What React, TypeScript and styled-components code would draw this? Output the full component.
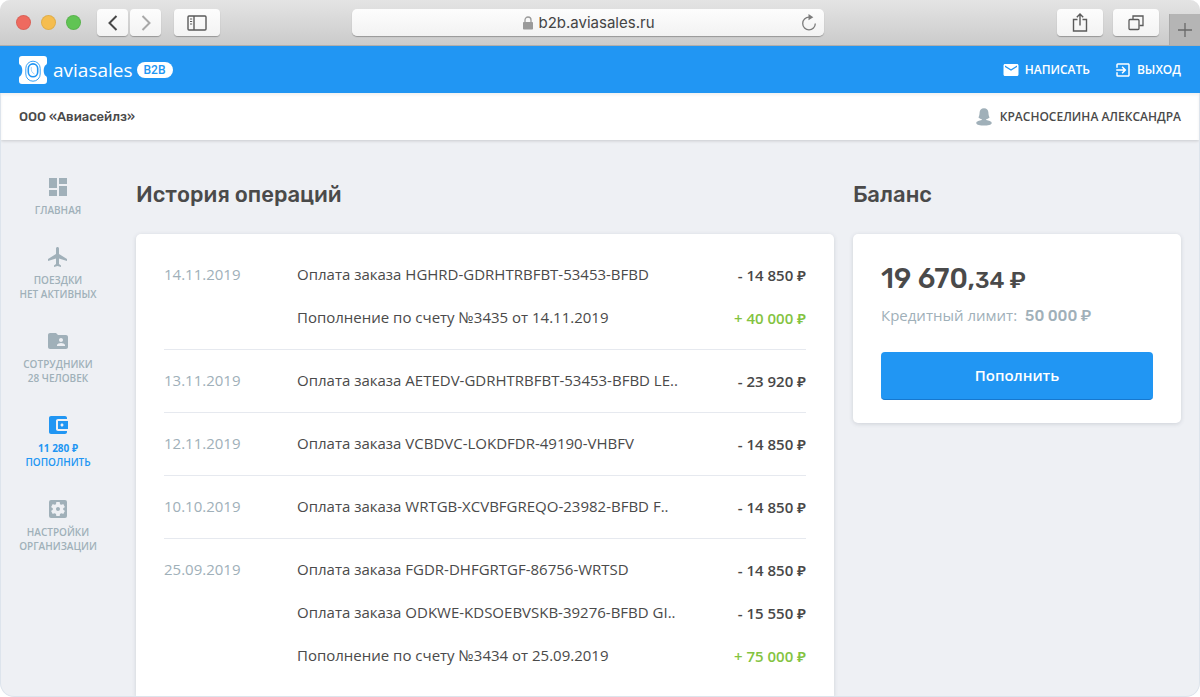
import React from "react";
import styled, { createGlobalStyle } from "styled-components";
import {
  MdDashboard,
  MdFlight,
  MdFolderShared,
  MdAccountBalanceWallet,
  MdSettingsApplications,
  MdEmail,
  MdExitToApp,
} from "react-icons/md";

const blue = "#2196f3";
const ink = "#4a4a4a";
const muted = "#a0b0b9";
const heading = '"Rubik", "Roboto", sans-serif';
const body = '"Open Sans", "Noto Sans", sans-serif';

const GlobalStyle = createGlobalStyle`
  *, *::before, *::after { box-sizing: border-box; }
  body { margin: 0; background: #fff; color: ${ink}; font: 400 15px/22px ${body}; }
  button, input { font: inherit; color: inherit; }
  h1, h2, p, ul { margin: 0; padding: 0; }
  ul { list-style: none; }
  a { color: inherit; text-decoration: none; }
`;

const Window = styled.div`
  display: flex;
  flex-direction: column;
  min-height: 100vh;
  border-radius: 10px 10px 14px 14px;
  overflow: hidden;
  background: #eef0f4;
`;

/* Browser chrome */

const Chrome = styled.header`
  display: flex;
  align-items: center;
  height: 46px;
  padding-left: 16px;
  background: linear-gradient(#e4e4e4, #cbcbcb);
  border-bottom: 1px solid #b0aeac;
`;

const ChromeSide = styled.div<{ $end?: boolean }>`
  flex: 1 1 ${(p) => (p.$end ? "40px" : "0")};
  display: flex;
  align-items: center;
  align-self: stretch;
  justify-content: ${(p) => (p.$end ? "flex-end" : "flex-start")};
`;

const Lights = styled.div`
  display: flex;
  gap: 10px;
  margin-right: 16px;
`;

const Light = styled.button<{ $color: string }>`
  width: 15px;
  height: 15px;
  padding: 0;
  border: 1px solid rgba(0, 0, 0, 0.08);
  border-radius: 50%;
  background: ${(p) => p.$color};
`;

const ChromeButton = styled.button<{ $wide?: boolean }>`
  display: flex;
  align-items: center;
  justify-content: center;
  width: ${(p) => (p.$wide ? 46 : 31)}px;
  height: 27px;
  padding: 0;
  border: 0;
  border-radius: 4px;
  background: linear-gradient(#fdfdfd, #f3f3f3);
  box-shadow: 0 1px 1px rgba(0, 0, 0, 0.28);
  color: #5a5a5a;
`;

const Arrows = styled.div`
  display: flex;
  gap: 2px;
  margin-right: 13px;
`;

const Address = styled.label`
  flex: 0 1 472px;
  display: flex;
  align-items: center;
  height: 27px;
  padding: 0 7px;
  border-radius: 5px;
  background: linear-gradient(#fdfdfd, #f2f2f2);
  box-shadow: 0 1px 1px rgba(0, 0, 0, 0.28);
`;

const AddressText = styled.span`
  flex: 1;
  display: flex;
  align-items: center;
  justify-content: center;
  gap: 5px;
  padding-left: 18px;
`;

const AddressInput = styled.input`
  width: 118px;
  padding: 0;
  border: 0;
  outline: 0;
  background: none;
  color: #444;
  font: 400 15px/20px "Inter", sans-serif;
`;

const Reload = styled.button`
  display: flex;
  padding: 0;
  border: 0;
  background: none;
`;

const ChromeActions = styled.div`
  display: flex;
  gap: 10px;
  margin-right: 10px;
`;

const NewTab = styled.button`
  display: flex;
  align-items: center;
  justify-content: center;
  align-self: flex-end;
  width: 31px;
  height: 31px;
  padding: 0;
  border: 0;
  border-left: 1px solid #a9a9a9;
  background: #b5b5b5;
`;

/* Site header */

const Brandbar = styled.div`
  display: flex;
  align-items: center;
  justify-content: space-between;
  height: 47px;
  padding: 0 19px;
  background: ${blue};
  color: #fff;
`;

const Page = styled.div`
  flex: 1;
  display: flex;
  flex-direction: column;
  border: 1px solid #dde4ec;
  border-top: 0;
  border-radius: 0 0 14px 14px;
  overflow: hidden;
`;

const Brand = styled.a`
  display: flex;
  align-items: center;
  font: 400 19px/28px ${body};
`;

const BrandName = styled.span`
  margin: 0 4px 0 6px;
`;

const Badge = styled.span`
  padding: 0 7px;
  border-radius: 8px;
  background: #fff;
  color: ${blue};
  font: 500 12px/16px "Roboto", sans-serif;
`;

const Links = styled.nav`
  display: flex;
  gap: 24px;
`;

const CapsLink = styled.a<{ $gap?: number }>`
  display: flex;
  align-items: center;
  gap: ${(p) => p.$gap ?? 5}px;
  font: 600 12px/18px ${body};
  text-transform: uppercase;
`;

const Accountbar = styled.div`
  display: flex;
  align-items: center;
  justify-content: space-between;
  height: 47px;
  padding: 1px 18px 0;
  background: #fff;
  box-shadow: 0 1px 3px rgba(0, 0, 0, 0.16), inset 0 2px 3px rgba(0, 0, 0, 0.06);
`;

const Company = styled.p`
  font: 500 13px/20px ${heading};
`;

/* Content */

const Layout = styled.div`
  flex: 1;
  display: grid;
  grid-template-columns: 116px minmax(0, 1fr) 328px;
  column-gap: 19px;
  padding-right: 18px;
`;

const SideNav = styled.nav`
  padding: 35px 2px 0 0;
`;

const NavList = styled.ul`
  display: flex;
  flex-direction: column;
  gap: 28px;
`;

const NavLink = styled.a<{ $active?: boolean }>`
  display: flex;
  flex-direction: column;
  align-items: center;
  color: ${(p) => (p.$active ? blue : muted)};
  font: 600 10px/14px ${body};
  text-align: center;
  text-transform: uppercase;

  svg { margin-bottom: 4px; }
`;

const NavStrong = styled.span`
  font-weight: 700;
`;

const Column = styled.section`
  display: flex;
  flex-direction: column;
`;

const Title = styled.h2`
  padding: 39px 0 23px;
  font: 500 22px/32px ${heading};
`;

const Card = styled.div<{ $open?: boolean }>`
  flex: ${(p) => (p.$open ? "1" : "none")};
  padding: ${(p) => (p.$open ? "10px 28px 0" : "28px 28px 23px")};
  border-radius: ${(p) => (p.$open ? "5px 5px 0 0" : "5px")};
  background: #fff;
  box-shadow: 0 1px 4px rgba(60, 70, 90, 0.18);
`;

const Table = styled.table`
  width: 100%;
  border-collapse: separate;
  border-spacing: 0;
  table-layout: fixed;

  td { padding: 0; height: 43px; vertical-align: middle; white-space: nowrap; }
`;

const Group = styled.tbody`
  tr:first-child td { height: 51px; padding-top: 8px; }
  tr:last-child td { height: 55px; padding-bottom: 11px; border-bottom: 1px solid #e6e9ef; }
  tr:only-child td { height: 63px; }
  &:last-child tr:last-child td { border-bottom-color: transparent; }
`;

const DateCell = styled.td`
  color: ${muted};
`;

const Amount = styled.span<{ $income: boolean }>`
  display: block;
  padding-top: 2px;
  color: ${(p) => (p.$income ? "#83c341" : "#484848")};
  font-weight: 600;
  text-align: right;
`;

const Sum = styled.p`
  font: 500 28px/34px ${heading};
`;

const Cents = styled.span`
  font-size: 23px;
`;

const Limit = styled.p`
  display: flex;
  align-items: baseline;
  gap: 8px;
  margin: 7px 0 25px;
  color: ${muted};
`;

const LimitValue = styled.strong`
  font: 500 15px/22px ${heading};
`;

const TopUp = styled.button`
  display: block;
  width: 100%;
  height: 48px;
  padding: 0 0 2px;
  border: 0;
  border-bottom: 1px solid #1678cf;
  border-radius: 4px;
  background: ${blue};
  color: #fff;
  font: 600 15px/22px ${body};
`;

const Logo = () => (
  <svg width="28" height="28" viewBox="0 0 28 28" aria-hidden="true">
    <path
      fill="#fff"
      d="M3 0H25A3 3 0 0 1 28 3V7Q28 8.500 26.800 9C24 10.500 24 18.500 26.800 20Q28 20.500 28 22V25A3 3 0 0 1 25 28H3A3 3 0 0 1 0 25V22Q0 20.500 1.200 20C4 18.500 4 10.500 1.200 9Q0 8.500 0 7V3A3 3 0 0 1 3 0Z"
    />
    <rect x="6.800" y="5.200" width="14.400" height="20" rx="7.200" fill="none" stroke={blue} strokeWidth="0.900" />
    <rect x="9.300" y="7.900" width="9.400" height="12.800" rx="4.700" fill="none" stroke={blue} strokeWidth="1.600" />
    <path d="M12.300 11C11.800 14.500 13 17 15.500 18" fill="none" stroke={blue} strokeWidth="0.400" />
  </svg>
);

const Person = () => (
  <svg width="16" height="18" viewBox="0 0 16 18" fill={muted} aria-hidden="true">
    <path d="M8 .3C10.800 .3 12.300 2 12.400 4.500C12.500 6.800 12.800 8.200 13.600 9.300C12.900 10.600 11.400 11 10.300 11.100V12C12.500 12.500 15.700 13.200 15.700 15C15.700 16.900 11.500 17.600 8 17.600S.3 16.900 .3 15C.3 13.200 3.500 12.500 5.700 12V11.100C4.600 11 3.100 10.600 2.400 9.300C3.200 8.200 3.500 6.800 3.600 4.500C3.700 2 5.200 .3 8 .3Z" />
  </svg>
);

const Wallet = () => (
  <svg width="24" height="24" viewBox="0 0 24 24" fill="currentColor" aria-hidden="true">
    <path d="M21 18v1c0 1.100-.9 2-2 2H5c-1.110 0-2-.9-2-2V5c0-1.100.890-2 2-2h14c1.100 0 2 .9 2 2v1h-9c-1.110 0-2 .9-2 2v8c0 1.100.890 2 2 2h9zm-9-2h10V8H12v8zm4-2.500c-.830 0-1.500-.670-1.500-1.500s.670-1.500 1.500-1.500 1.500.670 1.500 1.500-.670 1.500-1.500 1.500z" />
  </svg>
);

type Entry = { text: string; amount: string };

const history: { date: string; entries: Entry[] }[] = [
  {
    date: "14.11.2019",
    entries: [
      { text: "Оплата заказа HGHRD-GDRHTRBFBT-53453-BFBD", amount: "- 14 850 ₽" },
      { text: "Пополнение по счету №3435 от 14.11.2019", amount: "+ 40 000 ₽" },
    ],
  },
  { date: "13.11.2019", entries: [{ text: "Оплата заказа AETEDV-GDRHTRBFBT-53453-BFBD LE..", amount: "- 23 920 ₽" }] },
  { date: "12.11.2019", entries: [{ text: "Оплата заказа VCBDVC-LOKDFDR-49190-VHBFV", amount: "- 14 850 ₽" }] },
  { date: "10.10.2019", entries: [{ text: "Оплата заказа WRTGB-XCVBFGREQO-23982-BFBD F..", amount: "- 14 850 ₽" }] },
  {
    date: "25.09.2019",
    entries: [
      { text: "Оплата заказа FGDR-DHFGRTGF-86756-WRTSD", amount: "- 14 850 ₽" },
      { text: "Оплата заказа ODKWE-KDSOEBVSKB-39276-BFBD GI..", amount: "- 15 550 ₽" },
      { text: "Пополнение по счету №3434 от 25.09.2019", amount: "+ 75 000 ₽" },
    ],
  },
];

const BrowserChrome = () => (
  <Chrome>
    <ChromeSide>
      <Lights>
        <Light $color="#ee6a5f" aria-label="Закрыть" />
        <Light $color="#f5bd4f" aria-label="Свернуть" />
        <Light $color="#61c454" aria-label="Развернуть" />
      </Lights>
      <Arrows>
        <ChromeButton aria-label="Назад">
          <svg width="10" height="16" viewBox="0 0 10 16" fill="none" stroke="#484848" strokeWidth="2">
            <path d="M8.500 1L1.500 8L8.500 15" />
          </svg>
        </ChromeButton>
        <ChromeButton aria-label="Вперёд">
          <svg width="10" height="16" viewBox="0 0 10 16" fill="none" stroke="#a8a8a8" strokeWidth="2">
            <path d="M1.500 1L8.500 8L1.500 15" />
          </svg>
        </ChromeButton>
      </Arrows>
      <ChromeButton $wide aria-label="Боковая панель">
        <svg width="20" height="16" viewBox="0 0 20 16" fill="none" stroke="#5a5a5a" strokeWidth="1.400">
          <rect x="1" y="1" width="18" height="14" rx="1" />
          <path d="M7 1V15" />
          <path d="M3 4H5.200M3 6.500H5.200M3 9H5.200" strokeWidth="1" />
        </svg>
      </ChromeButton>
    </ChromeSide>
    <Address>
      <AddressText>
        <svg width="12" height="14" viewBox="0 0 12 14" aria-hidden="true">
          <rect x="1" y="6" width="10" height="7.500" rx="0.800" fill="#9a9a9a" />
          <path d="M3 6.500V4A3 3 0 0 1 9 4V6.500" fill="none" stroke="#9a9a9a" strokeWidth="1.300" />
        </svg>
        <AddressInput aria-label="Адрес" defaultValue="b2b.aviasales.ru" />
      </AddressText>
      <Reload aria-label="Обновить">
        <svg width="16" height="18" viewBox="0 0 16 18">
          <path d="M8 3.200A6.300 6.300 0 1 0 14.300 9.500" fill="none" stroke="#7c7c7c" strokeWidth="1.300" />
          <path d="M7.500 .1L12.300 3.200L7.500 6.200Z" fill="#7c7c7c" />
        </svg>
      </Reload>
    </Address>
    <ChromeSide $end>
      <ChromeActions>
        <ChromeButton $wide aria-label="Поделиться">
          <svg width="16" height="20" viewBox="0 0 16 20" fill="none" stroke="#5a5a5a" strokeWidth="1.400">
            <path d="M5.500 6.500H1.500V18H14.500V6.500H10.500" />
            <path d="M8 12.500V1M4.800 4.200L8 1L11.200 4.200" />
          </svg>
        </ChromeButton>
        <ChromeButton $wide aria-label="Вкладки">
          <svg width="16" height="16" viewBox="0 0 16 16" fill="none" stroke="#5a5a5a" strokeWidth="1.300">
            <rect x="1" y="4.500" width="10" height="10" rx="1" />
            <path d="M5 4V1H15V10.500H11.500" />
          </svg>
        </ChromeButton>
      </ChromeActions>
      <NewTab aria-label="Новая вкладка">
        <svg width="14" height="14" viewBox="0 0 14 14" stroke="#686868" strokeWidth="1.300">
          <path d="M7 0V14M0 7H14" />
        </svg>
      </NewTab>
    </ChromeSide>
  </Chrome>
);

const navItems = [
  { icon: <MdDashboard size={24} />, lines: ["Главная"] },
  { icon: <MdFlight size={24} />, lines: ["Поездки", "Нет активных"] },
  { icon: <MdFolderShared size={24} />, lines: ["Сотрудники", "28 человек"] },
  { icon: <Wallet />, lines: ["11 280 ₽", "Пополнить"], active: true },
  { icon: <MdSettingsApplications size={24} />, lines: ["Настройки", "организации"] },
];

export default function App() {
  return (
    <Window>
      <GlobalStyle />
      <BrowserChrome />
      <Brandbar>
        <Brand href="#">
          <Logo />
          <BrandName>aviasales</BrandName>
          <Badge>B2B</Badge>
        </Brand>
        <Links>
          <CapsLink href="#write">
            <MdEmail size={18} />
            Написать
          </CapsLink>
          <CapsLink href="#exit">
            <MdExitToApp size={18} />
            Выход
          </CapsLink>
        </Links>
      </Brandbar>
      <Page>
        <Accountbar>
          <Company>ООО «Авиасейлз»</Company>
          <CapsLink href="#profile" $gap={8}>
            <Person />
            Красноселина Александра
          </CapsLink>
        </Accountbar>
        <Layout>
          <SideNav>
            <NavList>
              {navItems.map(({ icon, lines, active }) => (
                <li key={lines[0]}>
                  <NavLink href="#" $active={active}>
                    {icon}
                    {active ? <NavStrong>{lines[0]}</NavStrong> : <span>{lines[0]}</span>}
                    {lines[1] && <span>{lines[1]}</span>}
                  </NavLink>
                </li>
              ))}
            </NavList>
          </SideNav>
          <Column>
            <Title>История операций</Title>
            <Card $open>
              <Table>
                <colgroup>
                  <col width="133" />
                  <col />
                  <col width="100" />
                </colgroup>
                {history.map((group) => (
                  <Group key={group.date}>
                    {group.entries.map((entry, i) => (
                      <tr key={entry.text}>
                        <DateCell>{i === 0 ? group.date : null}</DateCell>
                        <td>{entry.text}</td>
                        <td>
                          <Amount $income={entry.amount.startsWith("+")}>{entry.amount}</Amount>
                        </td>
                      </tr>
                    ))}
                  </Group>
                ))}
              </Table>
            </Card>
          </Column>
          <Column>
            <Title>Баланс</Title>
            <Card>
              <Sum>
                19 670,<Cents>34 ₽</Cents>
              </Sum>
              <Limit>
                Кредитный лимит: <LimitValue>50 000 ₽</LimitValue>
              </Limit>
              <TopUp>Пополнить</TopUp>
            </Card>
          </Column>
        </Layout>
      </Page>
    </Window>
  );
}
